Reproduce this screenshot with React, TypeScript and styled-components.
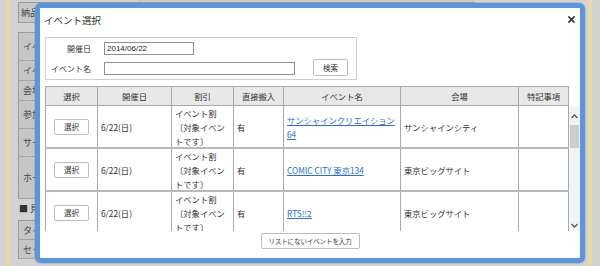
import * as React from "react";
import styled, { createGlobalStyle } from "styled-components";

const GlobalStyle = createGlobalStyle`
  html, body {
    margin: 0;
    padding: 0;
    background: #d2d2d2;
    font-family: "Noto Sans CJK JP", "Noto Sans", sans-serif;
    color: #333;
  }
`;

type EventRow = {
  date: string;
  name: string;
  place: string;
};

const rows: EventRow[] = [
  { date: "6/22(日)", name: "サンシャインクリエイション64", place: "サンシャインシティ" },
  { date: "6/22(日)", name: "COMIC CITY 東京134", place: "東京ビッグサイト" },
  { date: "6/22(日)", name: "RTS!!2", place: "東京ビッグサイト" },
];

const formLabels = [
  { text: "イベ", h: 28 },
  { text: "イベ", h: 20 },
  { text: "会場", h: 20 },
  { text: "参加", h: 28 },
  { text: "サー", h: 28 },
  { text: "ホー", h: 42 },
];

const cols = [52, 74, 62, 50, 117, 118, 51];
const heads = ["選択", "開催日", "割引", "直接搬入", "イベント名", "会場", "特記事項"];

export default () => {
  return (
    <>
      <GlobalStyle />
      <Page>
        <Stripe />
        <Back>
          <TopBar />
          <NoteCell>納品</NoteCell>
          <FormBlock>
            {formLabels.map((l, i) => (
              <FormRow key={i} $h={l.h}>
                <FormLabel>{l.text}</FormLabel>
              </FormRow>
            ))}
          </FormBlock>
          <SubHeading>■ 見</SubHeading>
          <FormBlock>
            <FormRow $h={19}>
              <FormLabel>タイ</FormLabel>
            </FormRow>
            <FormRow $h={19}>
              <FormLabel>セッ</FormLabel>
            </FormRow>
          </FormBlock>
        </Back>
        <RightStripe />

        <Dialog>
          <TitleBar>
            <Title>イベント選択</Title>
            <Close aria-label="close">
              <svg width="7" height="7" viewBox="0 0 7 7">
                <path d="M1 1 L6 6 M6 1 L1 6" stroke="#333" strokeWidth="1.7" strokeLinecap="square" />
              </svg>
            </Close>
          </TitleBar>

          <SearchBox>
            <SearchRow>
              <SearchLabel>開催日</SearchLabel>
              <TextInput $w={90} defaultValue="2014/06/22" />
            </SearchRow>
            <SearchRow>
              <SearchLabel>イベント名</SearchLabel>
              <TextInput $w={191} defaultValue="" />
              <SearchButton>検索</SearchButton>
            </SearchRow>
          </SearchBox>

          <TableArea>
            <HeadRow>
              {heads.map((h, i) => (
                <HeadCell key={h} $w={cols[i]}>
                  {h}
                </HeadCell>
              ))}
            </HeadRow>
            <BodyWrap>
              <BodyRows>
                {rows.map((r, i) => (
                  <BodyRow key={i}>
                    <Cell $w={cols[0]} $center>
                      <SmallButton>選択</SmallButton>
                    </Cell>
                    <Cell $w={cols[1]}>{r.date}</Cell>
                    <Cell $w={cols[2]}>
                      <Discount>
                        イベント割
                        <br />
                        〔対象イベン
                        <br />
                        トです〕
                      </Discount>
                    </Cell>
                    <Cell $w={cols[3]}>有</Cell>
                    <Cell $w={cols[4]}>
                      <EventLink href="#">{r.name}</EventLink>
                    </Cell>
                    <Cell $w={cols[5]}>{r.place}</Cell>
                    <Cell $w={cols[6]} />
                  </BodyRow>
                ))}
              </BodyRows>
              <ScrollBar>
                <Arrow>
                  <svg width="7" height="5" viewBox="0 0 7 5">
                    <path d="M0.5 4 L3.5 1 L6.5 4" stroke="#555" strokeWidth="1.3" fill="none" />
                  </svg>
                </Arrow>
                <Thumb />
                <Track />
                <Arrow>
                  <svg width="7" height="5" viewBox="0 0 7 5">
                    <path d="M0.5 1 L3.5 4 L6.5 1" stroke="#555" strokeWidth="1.3" fill="none" />
                  </svg>
                </Arrow>
              </ScrollBar>
            </BodyWrap>
          </TableArea>

          <Footer>
            <WideButton>リストにないイベントを入力</WideButton>
          </Footer>
        </Dialog>
      </Page>
    </>
  );
};

// ----------------------------------------------------------------------------

const Page = styled.div`
  position: relative;
  width: 600px;
  height: 266px;
  overflow: hidden;
  display: flex;
  background: #d2d2d2;
`;

const dots = `
  background-color: #d4d2c8;
  background-image: radial-gradient(circle, #e6d9a6 0.9px, transparent 1px);
  background-size: 2px 2px;
`;

const Stripe = styled.div`
  width: 4px;
  margin-left: 6px;
  ${dots};
`;

const RightStripe = styled.div`
  width: 4px;
  margin-right: 8px;
  ${dots};
`;

const Back = styled.div`
  flex: 1;
  margin-left: 8px;
  display: flex;
  flex-direction: column;
  position: relative;
`;

const TopBar = styled.div`
  height: 2px;
  margin-left: 120px;
  width: 337px;
  border-bottom: 1px solid #a8a8a8;
  background: #cacaca;
`;

const NoteCell = styled.div`
  margin-top: -1px;
  height: 19px;
  width: 120px;
  border: 1px solid #9c9c9c;
  background: #c8c8c8;
  font-size: 9px;
  line-height: 19px;
  padding-left: 2px;
  color: #444;
`;

const FormBlock = styled.div`
  margin-top: 9px;
  width: 200px;
  border: 1px solid #9c9c9c;
  border-bottom: none;
`;

const FormRow = styled.div<{ $h: number }>`
  height: ${(p) => p.$h - 1}px;
  border-bottom: 1px solid #a6a6a6;
  display: flex;
`;

const FormLabel = styled.div`
  width: 120px;
  background: #c6c6c6;
  font-size: 9px;
  display: flex;
  align-items: center;
  padding-left: 4px;
  color: #444;
`;

const SubHeading = styled.div`
  margin-top: 3px;
  font-size: 9px;
  line-height: 13px;
  color: #333;
  height: 13px;
  padding-left: 1px;
  & + ${FormBlock} {
    margin-top: 5px;
  }
`;

const Dialog = styled.div`
  position: absolute;
  left: 35px;
  top: 3px;
  width: 540px;
  height: 250px;
  border: 5px solid #5b95db;
  border-radius: 6px;
  background: #fff;
  display: flex;
  flex-direction: column;
  box-shadow: 0 0 0 1px rgba(120, 120, 120, 0.25);
`;

const TitleBar = styled.div`
  height: 24px;
  display: flex;
  align-items: center;
  justify-content: space-between;
  padding: 0 5px 0 4px;
  flex-shrink: 0;
`;

const Title = styled.div`
  font-size: 9.5px;
  color: #333;
`;

const Close = styled.div`
  width: 7px;
  height: 7px;
  display: flex;
  margin-top: -2px;
`;

const SearchBox = styled.div`
  margin: 5px 0 0 5px;
  width: 310px;
  height: 41px;
  border: 1px solid #cfcfcf;
  display: flex;
  flex-direction: column;
  justify-content: center;
  gap: 7px;
  flex-shrink: 0;
`;

const SearchRow = styled.div`
  display: flex;
  align-items: center;
  height: 13px;
`;

const SearchLabel = styled.div`
  width: 45px;
  margin-right: 13px;
  text-align: right;
  font-size: 8px;
  color: #333;
`;

const TextInput = styled.input<{ $w: number }>`
  box-sizing: border-box;
  width: ${(p) => p.$w}px;
  height: 13px;
  border: 1px solid #8f8f8f;
  padding: 0 2px;
  font-family: "Liberation Sans", sans-serif;
  font-size: 8px;
  color: #222;
  outline: none;
`;

const SearchButton = styled.button`
  margin-left: 18px;
  width: 35px;
  height: 17px;
  background: #fff;
  border: 1px solid #bdbdbd;
  border-radius: 2px;
  font-family: "Noto Sans CJK JP", sans-serif;
  font-size: 7.5px;
  color: #333;
  padding: 0;
  margin-top: -3px;
`;

const TableArea = styled.div`
  margin: 6px 0 0 5px;
  display: flex;
  flex-direction: column;
  flex-shrink: 0;
`;

const HeadRow = styled.div`
  display: flex;
  width: 524px;
  height: 20px;
  background: #e8e8e8;
  border-top: 1px solid #a9a9a9;
  box-sizing: border-box;
`;

const HeadCell = styled.div<{ $w: number }>`
  box-sizing: border-box;
  width: ${(p) => p.$w}px;
  border-left: 1px solid #a9a9a9;
  border-bottom: 1px solid #a9a9a9;
  &:last-child {
    border-right: 1px solid #a9a9a9;
  }
  display: flex;
  align-items: center;
  justify-content: center;
  font-size: 8.3px;
  color: #333;
`;

const BodyWrap = styled.div`
  display: flex;
  height: 125px;
`;

const BodyRows = styled.div`
  width: 524px;
  height: 125px;
  overflow: hidden;
`;

const BodyRow = styled.div`
  display: flex;
  height: 43px;
  box-sizing: border-box;
  border-bottom: 2px solid #b9b9b9;
`;

const Cell = styled.div<{ $w: number; $center?: boolean }>`
  box-sizing: border-box;
  width: ${(p) => p.$w}px;
  border-left: 1px solid #a9a9a9;
  &:last-child {
    border-right: 1px solid #a9a9a9;
  }
  display: flex;
  align-items: center;
  justify-content: ${(p) => (p.$center ? "center" : "flex-start")};
  padding: 0 3px;
  font-size: 8.3px;
  color: #333;
  line-height: 14px;
`;

const Discount = styled.div`
  text-align: left;
  white-space: nowrap;
`;

const EventLink = styled.a`
  color: #2d6fc7;
  text-decoration: underline;
  word-break: break-all;
`;

const SmallButton = styled.button`
  width: 35px;
  height: 16px;
  background: #fff;
  border: 1px solid #bdbdbd;
  border-radius: 2px;
  font-family: "Noto Sans CJK JP", sans-serif;
  font-size: 7.5px;
  color: #333;
  padding: 0;
`;

const ScrollBar = styled.div`
  width: 11px;
  height: 125px;
  background: #f1f4f7;
  display: flex;
  flex-direction: column;
  align-items: center;
`;

const Arrow = styled.div`
  height: 16px;
  width: 11px;
  display: flex;
  align-items: center;
  justify-content: center;
  padding-top: 4px;
  box-sizing: border-box;
`;

const Thumb = styled.div`
  width: 9px;
  height: 23px;
  margin-top: 3px;
  background: #cdcdcd;
`;

const Track = styled.div`
  flex: 1;
`;

const Footer = styled.div`
  display: flex;
  justify-content: center;
  margin-top: 2px;
`;

const WideButton = styled.button`
  width: 99px;
  height: 16px;
  background: #fff;
  border: 1px solid #bdbdbd;
  border-radius: 2px;
  font-family: "Noto Sans CJK JP", sans-serif;
  font-size: 6.5px;
  letter-spacing: -0.1px;
  white-space: nowrap;
  color: #333;
  padding: 0;
`;
